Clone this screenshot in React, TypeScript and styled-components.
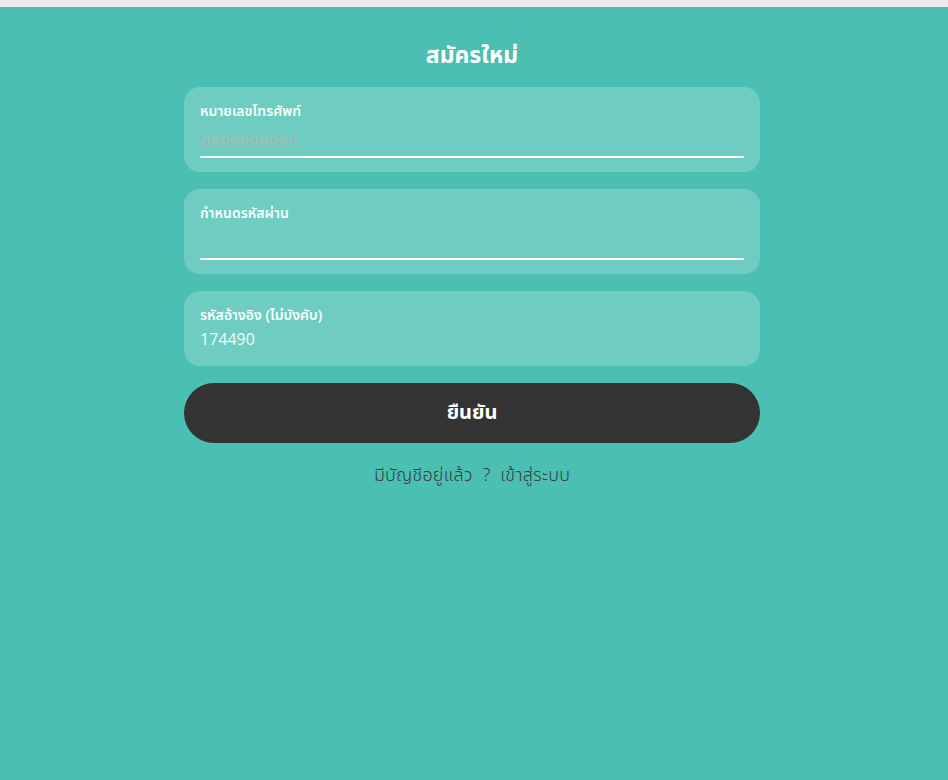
import { useState, ChangeEvent } from 'react'
import styled, { createGlobalStyle } from 'styled-components'

const GlobalStyle = createGlobalStyle`
  html, body {
    margin: 0;
    padding: 0;
    height: 100%;
  }
  body {
    font-family: "Noto Sans Thai", "Noto Sans", "Liberation Sans", sans-serif;
    background: #4bbfb1;
  }
  * { box-sizing: border-box; }
`

const Page = styled.div`
  min-height: 780px;
  display: flex;
  flex-direction: column;
  background: #4bbfb1;
  padding-right: 4px;
`

const TopStrip = styled.div`
  height: 7px;
  margin-right: -4px;
  background: #ececec;
`

const Form = styled.form`
  width: 576px;
  margin: 0 auto;
  display: flex;
  flex-direction: column;
  gap: 17px;
`

const Title = styled.h1`
  margin: 0;
  padding-top: 34px;
  margin-bottom: -1px;
  text-align: center;
  color: #ffffff;
  font-size: 23px;
  font-weight: 700;
  line-height: 30px;
`

const Field = styled.div<{ $tall?: boolean }>`
  background: #6fccc0;
  border-radius: 16px;
  padding: 15px 16px 0;
  height: ${p => (p.$tall ? '85px' : '75px')};
  display: flex;
  flex-direction: column;
`

const Label = styled.label`
  color: #f4fffd;
  font-size: 14px;
  font-weight: 600;
  line-height: 20px;
`

const Input = styled.input<{ $line?: boolean }>`
  border: none;
  outline: none;
  background: transparent;
  padding: 4px 0 0;
  margin-top: 3px;
  height: 33px;
  font-family: inherit;
  font-size: 17px;
  color: #f4fffd;
  border-bottom: ${p => (p.$line ? '2px solid #ffffff' : 'none')};

  &::placeholder {
    color: #a9b9b7;
  }
`

const Value = styled.div`
  margin-top: 2px;
  color: #eafaf7;
  font-size: 16px;
  line-height: 24px;
`

const SubmitButton = styled.button`
  height: 60px;
  border: none;
  border-radius: 30px;
  background: #333333;
  color: #ffffff;
  font-family: inherit;
  font-size: 20px;
  font-weight: 700;
  cursor: pointer;
`

const LoginLine = styled.p`
  margin: 2px 0 0;
  text-align: center;
  color: #37403f;
  font-size: 18px;
  font-weight: 300;
  word-spacing: 5px;
  letter-spacing: 0.2px;
`

function App() {
  const [phone, setPhone] = useState('')
  const [password, setPassword] = useState('')

  const handlePhone = (e: ChangeEvent<HTMLInputElement>) => setPhone(e.target.value)
  const handlePassword = (e: ChangeEvent<HTMLInputElement>) => setPassword(e.target.value)

  return (
    <Page>
      <GlobalStyle />
      <TopStrip />
      <Form onSubmit={e => e.preventDefault()}>
        <Title>สมัครใหม่</Title>
        <Field $tall>
          <Label>หมายเลขโทรศัพท์</Label>
          <Input $line value={phone} onChange={handlePhone} placeholder="0899999999" />
        </Field>
        <Field $tall>
          <Label>กำหนดรหัสผ่าน</Label>
          <Input $line type="password" value={password} onChange={handlePassword} />
        </Field>
        <Field>
          <Label>รหัสอ้างอิง (ไม่บังคับ)</Label>
          <Value>174490</Value>
        </Field>
        <SubmitButton type="submit">ยืนยัน</SubmitButton>
        <LoginLine>มีบัญชีอยู่แล้ว ? เข้าสู่ระบบ</LoginLine>
      </Form>
    </Page>
  )
}

export default App
